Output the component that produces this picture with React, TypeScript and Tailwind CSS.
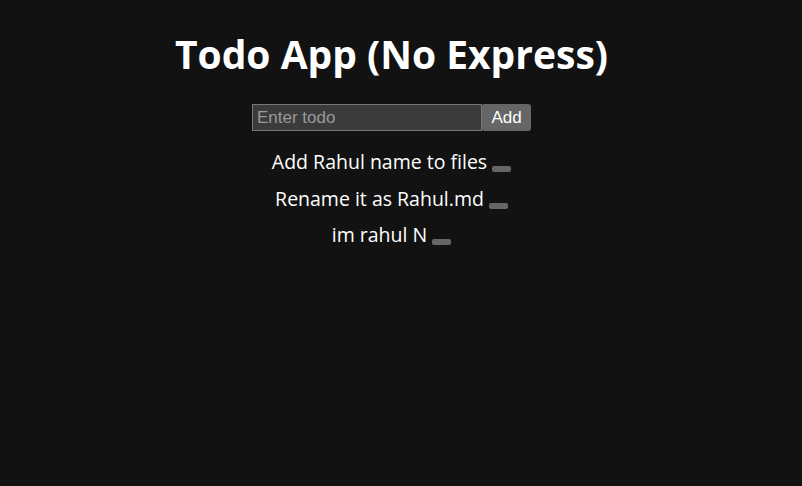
export default function App() {
  const todos = ['Add Rahul name to files', 'Rename it as Rahul.md', 'im rahul N'];
  return (
    <div className="min-h-[486px] bg-[#121212] text-white flex flex-col items-center pr-[19px] font-['Open_Sans',sans-serif]">
      <h1 className="mt-[30px] text-[39px] leading-[48px] font-bold">Todo App (No Express)</h1>
      <div className="mt-[26px] flex items-stretch h-[27px]">
        <input
          placeholder="Enter todo"
          className="w-[230px] bg-[#3b3b3b] border border-[#777] px-[4px] text-[17px] text-white placeholder:text-[#999] font-['Liberation_Sans',sans-serif] outline-none"
        />
        <button className="w-[49px] bg-[#666] rounded-r-[3px] rounded-l-[2px] text-[17px] text-white font-['Liberation_Sans',sans-serif]">
          Add
        </button>
      </div>
      <ul className="mt-[18px] flex flex-col items-center gap-[11.5px]">
        {todos.map(t => (
          <li key={t} className="flex items-end text-[19.5px] leading-[25px]">
            <span>{t}</span>
            <button className="ml-[5px] mb-[2px] w-[19px] h-[6px] bg-[#666] rounded-[2px]" />
          </li>
        ))}
      </ul>
    </div>
  );
}
